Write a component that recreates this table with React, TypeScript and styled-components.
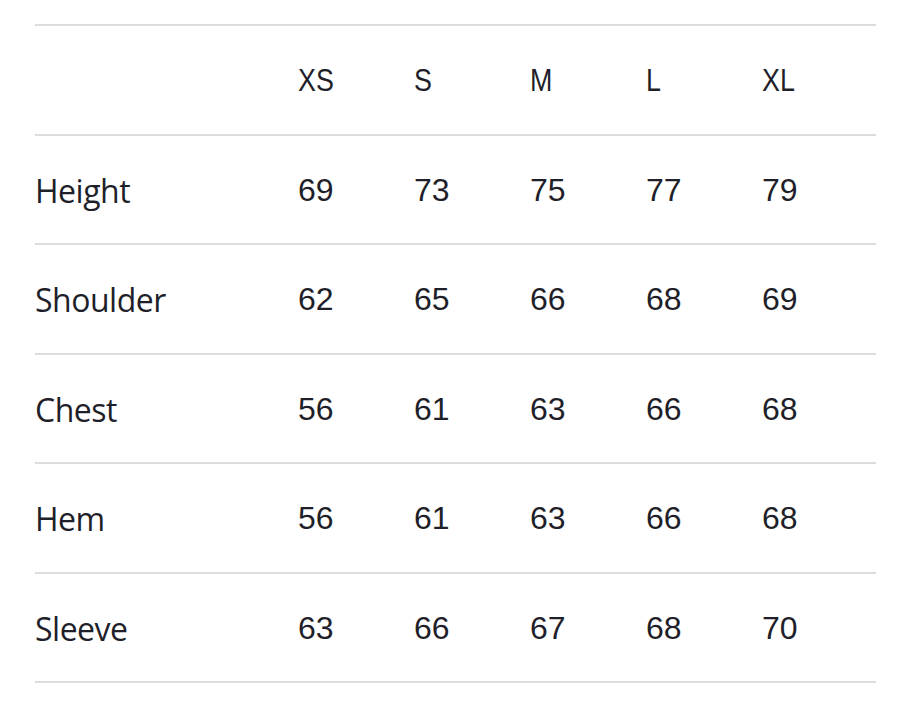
import styled, { createGlobalStyle } from "styled-components";

const sizes = ["XS", "S", "M", "L", "XL"];

const rows = [
    { name: "Height", values: [69, 73, 75, 77, 79] },
    { name: "Shoulder", values: [62, 65, 66, 68, 69] },
    { name: "Chest", values: [56, 61, 63, 66, 68] },
    { name: "Hem", values: [56, 61, 63, 66, 68] },
    { name: "Sleeve", values: [63, 66, 67, 68, 70] },
];

const App = () => {
  return (
    <>
      <GlobalStyle />
      <Page>
        <Table>
          <Row>
            <Label />
            {sizes.map((s) => (
              <Cell key={s}>
                <SizeName>{s}</SizeName>
              </Cell>
            ))}
          </Row>
          {rows.map((r) => (
            <Row key={r.name}>
              <Label>{r.name}</Label>
              {r.values.map((v, i) => (
                <Cell key={i}>{v}</Cell>
              ))}
            </Row>
          ))}
        </Table>
      </Page>
    </>
  );
};

export default App;

const GlobalStyle = createGlobalStyle`
body {
  margin: 0;
  background: #fff;
}
`;

const Page = styled.div`
width: 900px;
height: 702px;
padding: 24px 24px 0 35px;
box-sizing: border-box;
`;

const Table = styled.div`
width: 841px;
border-bottom: 2px solid #dcdcdc;
`;

const Row = styled.div`
display: grid;
grid-template-columns: 263px repeat(4, 116px) 1fr;
align-items: center;
height: 109.5px;
box-sizing: border-box;
border-top: 2px solid #dcdcdc;
padding-top: 2px;
color: #1f1f2a;
`;

const Label = styled.div`
font-family: "Open Sans", sans-serif;
font-size: 32px;
letter-spacing: -0.5px;
`;

const Cell = styled.div`
font-family: "Liberation Sans", Arial, sans-serif;
font-size: 32px;
`;

/* header letters are set narrower than the figures below them */
const SizeName = styled.span`
display: inline-block;
transform: scaleX(0.84);
transform-origin: left center;
`;
